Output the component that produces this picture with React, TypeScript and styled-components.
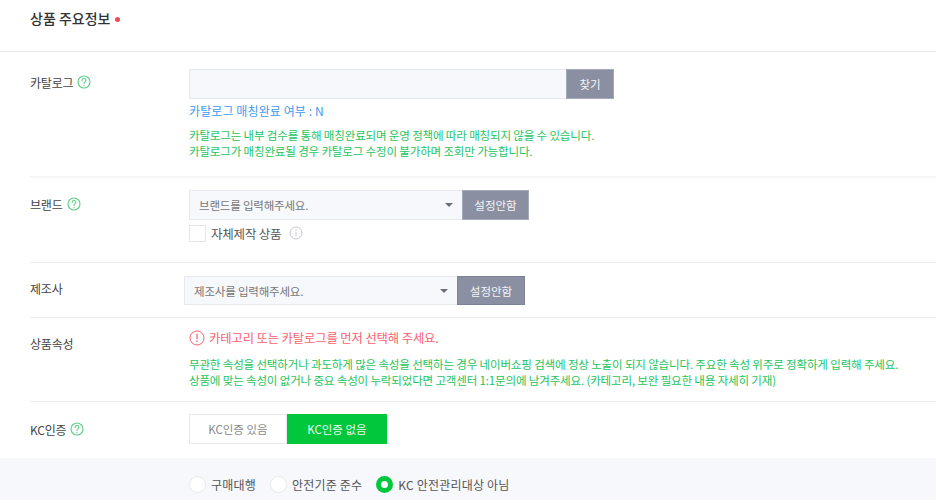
import React from "react";
import styled, { createGlobalStyle } from "styled-components";

const Global = createGlobalStyle`
  html, body { margin: 0; padding: 0; background: #fff; }
  body { width: 936px; height: 500px; overflow: hidden; font-family: "Noto Sans CJK KR", "Liberation Sans", sans-serif; }
`;

const Page = styled.div`
  width: 936px;
  height: 500px;
  overflow: hidden;
  letter-spacing: -0.2px;
`;

const Header = styled.div`
  height: 52px;
  box-sizing: border-box;
  padding: 9px 0 0 30px;
  display: flex;
  align-items: flex-start;
  border-bottom: 1px solid #e8e8e8;
`;

const Title = styled.h2`
  margin: 0;
  font-size: 14px;
  line-height: 19px;
  font-weight: 500;
  color: #333;
  letter-spacing: 0;
`;

const Dot = styled.span`
  width: 5px;
  height: 5px;
  border-radius: 50%;
  background: #f6485a;
  margin: 8px 0 0 5px;
`;

const Row = styled.div<{ $h: number; $pt: number; $border?: number }>`
  margin-left: 30px;
  height: ${(p) => p.$h}px;
  box-sizing: border-box;
  padding-top: ${(p) => p.$pt}px;
  display: flex;
  border-bottom: ${(p) => p.$border ?? 1}px solid ${(p) => ((p.$border ?? 1) > 1 ? "#f4f4f4" : "#ebebeb")};
`;

const Label = styled.div<{ $w?: number; $mt: number }>`
  width: ${(p) => p.$w ?? 159}px;
  flex: none;
  margin-top: ${(p) => p.$mt}px;
  display: flex;
  align-items: center;
  gap: 4px;
  height: 18px;
  font-size: 12px;
  color: #444;
`;

const Content = styled.div`
  display: flex;
  flex-direction: column;
  align-items: flex-start;
`;

const Field = styled.div`
  display: flex;
`;

const Input = styled.div<{ $w: number; $h: number }>`
  width: ${(p) => p.$w}px;
  height: ${(p) => p.$h}px;
  box-sizing: border-box;
  display: flex;
  align-items: center;
  justify-content: space-between;
  padding: 0 9px;
  background: #f6f8fc;
  border: 1px solid #e8e9ee;
  border-right: none;
  font-size: 11.5px;
  color: #767676;
`;

const Caret = styled.span`
  width: 0;
  height: 0;
  border-left: 4px solid transparent;
  border-right: 4px solid transparent;
  border-top: 4px solid #6b6f78;
`;

const GrayButton = styled.button<{ $w: number; $h: number; $edge?: string }>`
  width: ${(p) => p.$w}px;
  height: ${(p) => p.$h}px;
  padding: 0;
  background: #8a90a1;
  border: 1px solid ${(p) => p.$edge ?? "#a4a9b7"};
  color: #f4f5f7;
  font: inherit;
  font-size: 11.5px;
`;

const BlueText = styled.div`
  margin-top: 3px;
  font-size: 12px;
  line-height: 17px;
  color: #3f9aee;
  letter-spacing: 0.1px;
`;

const Help = styled.p<{ $mt: number }>`
  margin: ${(p) => p.$mt}px 0 0;
  font-size: 11.5px;
  line-height: 16px;
  color: #1dc45e;
  white-space: nowrap;
  letter-spacing: -0.15px;
`;

const CheckRow = styled.div`
  margin-top: 4px;
  display: flex;
  align-items: center;
  height: 18px;
  font-size: 12.5px;
  color: #555;
`;

const CheckBox = styled.span`
  width: 17px;
  height: 17px;
  box-sizing: border-box;
  border: 1px solid #e6e6e6;
  background: #fff;
  margin-right: 5px;
`;

const InfoWrap = styled.span`
  display: flex;
  margin-left: 8px;
`;

const Alert = styled.div`
  display: flex;
  align-items: center;
  gap: 4px;
  height: 18px;
  font-size: 12.3px;
  color: #f8616f;
  letter-spacing: -0.1px;
`;

const Toggle = styled.div`
  display: flex;
`;

const ToggleButton = styled.button<{ $on?: boolean; $w: number }>`
  width: ${(p) => p.$w}px;
  height: 30px;
  box-sizing: border-box;
  padding: 0;
  font: inherit;
  font-size: 11.5px;
  border: 1px solid ${(p) => (p.$on ? "#00c73c" : "#e8e9ee")};
  background: ${(p) => (p.$on ? "#00c73c" : "#fff")};
  color: ${(p) => (p.$on ? "#eafbef" : "#8a8a8a")};
`;

const KcPanel = styled.div`
  height: 42px;
  background: #f6f8fc;
  padding: 17px 0 0 189px;
  display: flex;
  align-items: flex-start;
`;

const Radio = styled.label<{ $gap: number }>`
  display: flex;
  align-items: center;
  height: 18px;
  margin-right: ${(p) => p.$gap}px;
  font-size: 12px;
  letter-spacing: 0.2px;
  color: #555;
`;

const RadioMark = styled.span<{ $on?: boolean }>`
  width: 17px;
  height: 17px;
  box-sizing: border-box;
  border-radius: 50%;
  margin-right: 5px;
  background: #fff;
  border: ${(p) => (p.$on ? "5.5px solid #00c73c" : "1px solid #e8e9ee")};
`;

const QuestionIcon = () => (
  <svg width="14" height="14" viewBox="0 0 14 14" fill="none" stroke="#62cf8a" strokeWidth="1.15">
    <circle cx="7" cy="7" r="6" />
    <path d="M5.1 5.4C5.1 4.2 6 3.5 7 3.5s1.9.7 1.9 1.8c0 1.6-1.9 1.5-1.9 3.2" strokeLinecap="round" />
    <circle cx="7" cy="10.4" r=".6" fill="#62cf8a" stroke="none" />
  </svg>
);

const InfoIcon = () => (
  <svg width="14" height="14" viewBox="0 0 14 14" fill="none" stroke="#c4c7cc" strokeWidth="1">
    <circle cx="7" cy="7" r="6" />
    <path d="M7 6.2v4" />
    <circle cx="7" cy="4.2" r=".6" fill="#b0b4ba" stroke="none" />
  </svg>
);

const AlertIcon = () => (
  <svg width="16" height="16" viewBox="0 0 16 16" fill="none" stroke="#f8616f" strokeWidth="1">
    <circle cx="8" cy="8" r="7" />
    <path d="M8 3.8v5.4M8 10.6v1.4" strokeWidth="1.2" />
  </svg>
);

export default function App() {
  return (
    <Page>
      <Global />
      <Header>
        <Title>상품 주요정보</Title>
        <Dot />
      </Header>

      <Row $h={126} $pt={17} $border={2}>
        <Label $mt={4}>카탈로그 <QuestionIcon /></Label>
        <Content>
          <Field>
            <Input $w={377} $h={30} />
            <GrayButton $w={48} $h={30}>찾기</GrayButton>
          </Field>
          <BlueText>카탈로그 매칭완료 여부 : N</BlueText>
          <Help $mt={8}>
            카탈로그는 내부 검수를 통해 매칭완료되며 운영 정책에 따라 매칭되지 않을 수 있습니다.
            <br />
            카탈로그가 매칭완료될 경우 카탈로그 수정이 불가하며 조회만 가능합니다.
          </Help>
        </Content>
      </Row>

      <Row $h={85} $pt={12}>
        <Label $mt={5}>브랜드 <QuestionIcon /></Label>
        <Content>
          <Field>
            <Input $w={273} $h={30}>브랜드를 입력해주세요.<Caret /></Input>
            <GrayButton $w={67} $h={30}>설정안함</GrayButton>
          </Field>
          <CheckRow>
            <CheckBox />
            자체제작 상품
            <InfoWrap><InfoIcon /></InfoWrap>
          </CheckRow>
        </Content>
      </Row>

      <Row $h={55} $pt={13}>
        <Label $w={154} $mt={3}>제조사</Label>
        <Content>
          <Field>
            <Input $w={273} $h={29}>제조사를 입력해주세요.<Caret /></Input>
            <GrayButton $w={68} $h={29} $edge="#7c8399">설정안함</GrayButton>
          </Field>
        </Content>
      </Row>

      <Row $h={84} $pt={11}>
        <Label $mt={5}>상품속성</Label>
        <Content>
          <Alert><AlertIcon />카테고리 또는 카탈로그를 먼저 선택해 주세요.</Alert>
          <Help $mt={9}>
            무관한 속성을 선택하거나 과도하게 많은 속성을 선택하는 경우 네이버쇼핑 검색에 정상 노출이 되지 않습니다. 주요한 속성 위주로 정확하게 입력해 주세요.
            <br />
            상품에 맞는 속성이 없거나 중요 속성이 누락되었다면 고객센터 1:1문의에 남겨주세요. (카테고리, 보완 필요한 내용 자세히 기재)
          </Help>
        </Content>
      </Row>

      <Row $h={56} $pt={12} $border={0}>
        <Label $mt={6}>KC인증 <QuestionIcon /></Label>
        <Content>
          <Toggle>
            <ToggleButton $w={98}>KC인증 있음</ToggleButton>
            <ToggleButton $w={100} $on>KC인증 없음</ToggleButton>
          </Toggle>
        </Content>
      </Row>

      <KcPanel>
        <Radio $gap={14}><RadioMark />구매대행</Radio>
        <Radio $gap={14}><RadioMark />안전기준 준수</Radio>
        <Radio $gap={0}><RadioMark $on />KC 안전관리대상 아님</Radio>
      </KcPanel>
    </Page>
  );
}
